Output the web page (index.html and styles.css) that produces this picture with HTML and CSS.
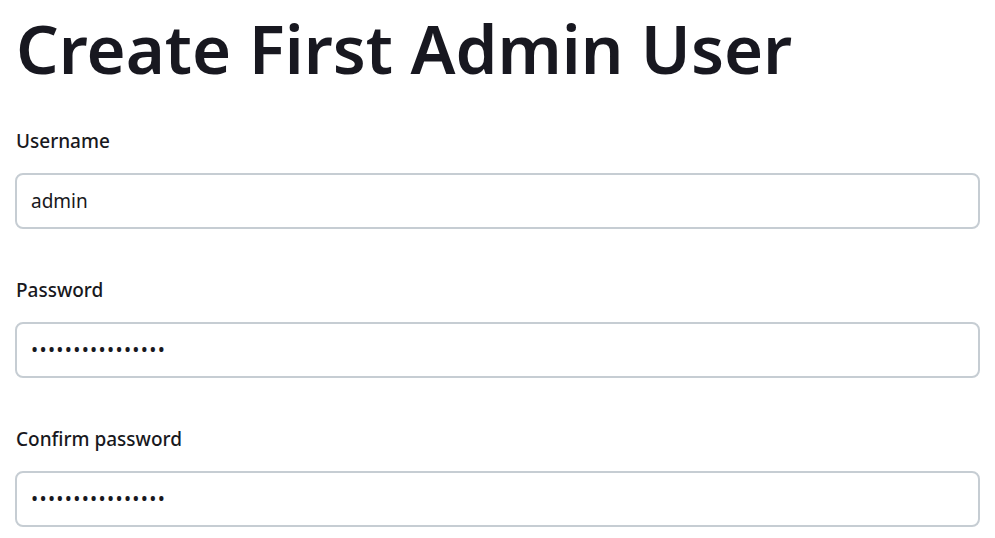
FILE: index.html
```html
<!DOCTYPE html>
<html lang="en">
<head>
    <meta charset="UTF-8">
    <meta name="viewport" content="width=device-width, initial-scale=1.0">
    <title>Create First Admin User</title>
    <link rel="stylesheet" href="styles.css">
</head>
<body>
    <h1>Create First Admin User</h1>

    <!-- Setup form -->
    <form class="setup-form">
        <div class="field">
            <label for="username">Username</label>
            <input id="username" type="text" value="admin">
        </div>
        <div class="field">
            <label for="password">Password</label>
            <input id="password" type="password" value="adminpassword123">
        </div>
        <div class="field">
            <label for="confirm">Confirm password</label>
            <input id="confirm" type="password" value="adminpassword123">
        </div>
    </form>
</body>
</html>
```

FILE: styles.css
```css
body {
    font-family: "Noto Sans", "Open Sans", sans-serif;
    margin: 0;
    padding: 0 15px 0 16px;
    color: #181820;
    background-color: white;
}
h1 {
    font-size: 67px;
    font-weight: 600;
    line-height: 1;
    margin: 15px 0 47px;
}
/* Form fields */
.setup-form {
    display: flex;
    flex-direction: column;
    gap: 49px;
}
.field {
    display: flex;
    flex-direction: column;
    gap: 20px;
}
.field label {
    font-size: 19px;
    font-weight: 500;
    line-height: 24px;
}
.field input {
    height: 56px;
    box-sizing: border-box;
    margin-left: -1px;
    padding: 0 14px;
    border: 2.5px solid #c6cdd3;
    border-radius: 8px;
    font-family: inherit;
    font-size: 19px;
    color: #181820;
    outline: none;
}
.field input[type="password"] {
    letter-spacing: 1.3px;
}
```
